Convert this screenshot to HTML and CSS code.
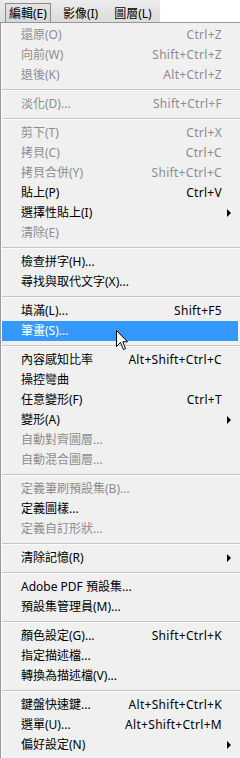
FILE: index.html
```html
<!DOCTYPE html>
<html lang="zh-Hant">
<head>
  <meta charset="UTF-8" />
  <meta name="viewport" content="width=device-width, initial-scale=1" />
  <title>編輯選單</title>
  <link rel="stylesheet" href="styles.css">
</head>
<body>
  <div class="menubar">
    <span class="mb-item active">編輯(E)</span>
    <span class="mb-item">影像(I)</span>
    <span class="mb-item">圖層(L)</span>
  </div>

  <ul class="menu">
    <li class="item off"><span>還原(O)</span><span class="key">Ctrl+Z</span></li>
    <li class="item off"><span>向前(W)</span><span class="key">Shift+Ctrl+Z</span></li>
    <li class="item off"><span>退後(K)</span><span class="key">Alt+Ctrl+Z</span></li>
    <li class="sep"></li>
    <li class="item off"><span>淡化(D)...</span><span class="key">Shift+Ctrl+F</span></li>
    <li class="sep"></li>
    <li class="item off"><span>剪下(T)</span><span class="key">Ctrl+X</span></li>
    <li class="item off"><span>拷貝(C)</span><span class="key">Ctrl+C</span></li>
    <li class="item off"><span>拷貝合併(Y)</span><span class="key">Shift+Ctrl+C</span></li>
    <li class="item"><span>貼上(P)</span><span class="key">Ctrl+V</span></li>
    <li class="item sub"><span>選擇性貼上(I)</span><span class="key"></span></li>
    <li class="item off"><span>清除(E)</span><span class="key"></span></li>
    <li class="sep"></li>
    <li class="item"><span>檢查拼字(H)...</span><span class="key"></span></li>
    <li class="item"><span>尋找與取代文字(X)...</span><span class="key"></span></li>
    <li class="sep"></li>
    <li class="item"><span>填滿(L)...</span><span class="key">Shift+F5</span></li>
    <li class="item hover"><span>筆畫(S)...</span><span class="key"></span></li>
    <li class="sep"></li>
    <li class="item"><span>內容感知比率</span><span class="key">Alt+Shift+Ctrl+C</span></li>
    <li class="item"><span>操控彎曲</span><span class="key"></span></li>
    <li class="item"><span>任意變形(F)</span><span class="key">Ctrl+T</span></li>
    <li class="item sub"><span>變形(A)</span><span class="key"></span></li>
    <li class="item off"><span>自動對齊圖層...</span><span class="key"></span></li>
    <li class="item off"><span>自動混合圖層...</span><span class="key"></span></li>
    <li class="sep"></li>
    <li class="item off"><span>定義筆刷預設集(B)...</span><span class="key"></span></li>
    <li class="item"><span>定義圖樣...</span><span class="key"></span></li>
    <li class="item off"><span>定義自訂形狀...</span><span class="key"></span></li>
    <li class="sep"></li>
    <li class="item sub"><span>清除記憶(R)</span><span class="key"></span></li>
    <li class="sep"></li>
    <li class="item"><span>Adobe PDF 預設集...</span><span class="key"></span></li>
    <li class="item"><span>預設集管理員(M)...</span><span class="key"></span></li>
    <li class="sep"></li>
    <li class="item"><span>顏色設定(G)...</span><span class="key">Shift+Ctrl+K</span></li>
    <li class="item"><span>指定描述檔...</span><span class="key"></span></li>
    <li class="item"><span>轉換為描述檔(V)...</span><span class="key"></span></li>
    <li class="sep"></li>
    <li class="item"><span>鍵盤快速鍵...</span><span class="key">Alt+Shift+Ctrl+K</span></li>
    <li class="item"><span>選單(U)...</span><span class="key">Alt+Shift+Ctrl+M</span></li>
    <li class="item sub"><span>偏好設定(N)</span><span class="key"></span></li>
  </ul>

  <!-- mouse pointer over 筆畫 -->
  <svg class="cursor" width="13" height="21" viewBox="0 0 13 21">
    <path d="M0.5 0.5 L0.5 16.5 L4.5 12.5 L7.5 19.5 L9.5 18.5 L6.8 11.8 L11.5 11.8 Z" fill="#fff" stroke="#000" stroke-width="1" stroke-linejoin="miter"/>
  </svg>
</body>
</html>
```

FILE: styles.css
```css
body {
  margin: 0;
  padding: 0;
  background: #fff;
  font-family: "Noto Sans", "Noto Sans CJK TC", sans-serif;
  font-size: 12px;
  color: #000;
  position: relative;
  overflow: hidden;
}

.menubar {
  width: 160px;
  height: 22px;
  background: linear-gradient(#ececec, #dcdcdc);
  display: flex;
  align-items: flex-end;
  gap: 8px;
  padding-left: 5px;
  box-sizing: border-box;
}

.mb-item {
  flex-shrink: 0;
  white-space: nowrap;
  height: 19px;
  line-height: 20px;
  padding: 0 3px;
  border: 1px solid transparent;
  border-bottom: none;
  box-sizing: border-box;
}

.mb-item.active {
  border-color: #8c8c8c;
  background: linear-gradient(#e4e4e4, #d6d6d6);
}

.menu {
  list-style: none;
  margin: 0;
  padding: 2px 0 3px 0;
  background: #f0f0f0;
  border-top: 1px solid #979797;
  border-left: 1px solid #979797;
  box-shadow: inset 1px 0 0 #fcfcfc;
}

.item {
  display: grid;
  grid-template-columns: 1fr auto 18px;
  align-items: center;
  height: 20px;
  line-height: 20px;
  padding-left: 20px;
  white-space: nowrap;
}

.item::after {
  content: "";
}

.key {
  letter-spacing: 0.3px;
}

.item.off {
  color: #8d8d8d;
}

.item.sub::after {
  justify-self: start;
  margin-left: 5px;
  width: 0;
  height: 0;
  border-left: 4px solid #000;
  border-top: 4px solid transparent;
  border-bottom: 4px solid transparent;
}

.item.hover {
  background: #3399ff;
  color: #fff;
  margin: 0 2px 0 1px;
  padding-left: 19px;
}

.sep {
  height: 9px;
  margin: 0 0 0 1px;
  background: linear-gradient(#c5c5c5, #c5c5c5) no-repeat 0 4px / 100% 1px,
              linear-gradient(#fcfcfc, #fcfcfc) no-repeat 0 5px / 100% 1px;
}

.cursor {
  position: absolute;
  left: 116px;
  top: 330px;
}
```
